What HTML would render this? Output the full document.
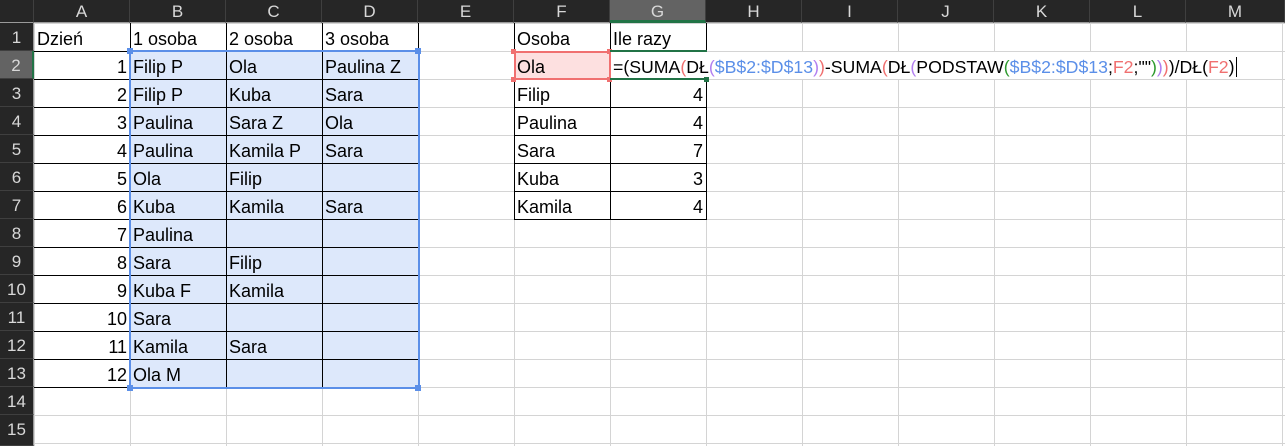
<!DOCTYPE html>
<html><head><meta charset="utf-8"><style>
body{margin:0;width:1285px;height:446px;overflow:hidden;background:#fff;font-family:"Liberation Sans",Arial,sans-serif;position:relative}
div{position:absolute;box-sizing:border-box}
.grid{left:34px;top:23px;width:1251px;height:423px;
background-image:linear-gradient(to right,#d4d4d4 1px,transparent 1px),linear-gradient(to bottom,#d4d4d4 1px,transparent 1px);
background-size:96px 28px;background-position:0 0}
.ch{top:0;height:23px;background:#262626;color:#d8d8d8;text-align:center;font-size:17px;line-height:24px;border-right:1px solid #3f3f3f;border-bottom:1px solid #9a9a9a;width:96px}
.rh{left:0;width:34px;height:28px;background:#262626;color:#d8d8d8;text-align:center;font-size:17px;line-height:30px;border-bottom:1px solid #3f3f3f;border-right:1px solid #9a9a9a}
.c{height:28px;line-height:32px;font-size:18px;white-space:nowrap;padding-left:3px;width:96px;color:#000}
.r{text-align:right;padding-right:3px;padding-left:0}
.hl{height:1px;background:#000}
.vl{width:1px;background:#000}
</style></head><body>
<div class="grid"></div>
<div class="ch" style="left:0;width:34px"></div>
<div class="ch" style="left:34px">A</div><div class="ch" style="left:130px">B</div><div class="ch" style="left:226px">C</div><div class="ch" style="left:322px">D</div><div class="ch" style="left:418px">E</div><div class="ch" style="left:514px">F</div><div class="ch" style="left:610px;background:#636363;border-bottom:3px solid #217346">G</div><div class="ch" style="left:706px">H</div><div class="ch" style="left:802px">I</div><div class="ch" style="left:898px">J</div><div class="ch" style="left:994px">K</div><div class="ch" style="left:1090px">L</div><div class="ch" style="left:1186px;width:99px">M</div>
<div class="rh" style="top:23px">1</div><div class="rh" style="top:51px;background:#636363;border-right:2px solid #217346">2</div><div class="rh" style="top:79px">3</div><div class="rh" style="top:107px">4</div><div class="rh" style="top:135px">5</div><div class="rh" style="top:163px">6</div><div class="rh" style="top:191px">7</div><div class="rh" style="top:219px">8</div><div class="rh" style="top:247px">9</div><div class="rh" style="top:275px">10</div><div class="rh" style="top:303px">11</div><div class="rh" style="top:331px">12</div><div class="rh" style="top:359px">13</div><div class="rh" style="top:387px">14</div><div class="rh" style="top:415px;height:31px">15</div>
<div style="left:130px;top:51px;width:288px;height:336px;background:#dde8fb"></div>
<div class="hl" style="left:34px;top:51px;width:384px"></div><div class="hl" style="left:34px;top:79px;width:384px"></div><div class="hl" style="left:34px;top:107px;width:384px"></div><div class="hl" style="left:34px;top:135px;width:384px"></div><div class="hl" style="left:34px;top:163px;width:384px"></div><div class="hl" style="left:34px;top:191px;width:384px"></div><div class="hl" style="left:34px;top:219px;width:384px"></div><div class="hl" style="left:34px;top:247px;width:384px"></div><div class="hl" style="left:34px;top:275px;width:384px"></div><div class="hl" style="left:34px;top:303px;width:384px"></div><div class="hl" style="left:34px;top:331px;width:384px"></div><div class="hl" style="left:34px;top:359px;width:384px"></div><div class="hl" style="left:34px;top:387px;width:384px"></div>
<div class="vl" style="left:130px;top:23px;height:365px"></div><div class="vl" style="left:226px;top:23px;height:365px"></div><div class="vl" style="left:322px;top:23px;height:365px"></div><div class="vl" style="left:418px;top:23px;height:365px"></div>
<div class="hl" style="left:514px;top:51px;width:193px"></div><div class="hl" style="left:514px;top:79px;width:193px"></div><div class="hl" style="left:514px;top:107px;width:193px"></div><div class="hl" style="left:514px;top:135px;width:193px"></div><div class="hl" style="left:514px;top:163px;width:193px"></div><div class="hl" style="left:514px;top:191px;width:193px"></div><div class="hl" style="left:514px;top:219px;width:193px"></div>
<div class="vl" style="left:514px;top:23px;height:197px"></div><div class="vl" style="left:610px;top:23px;height:197px"></div><div class="vl" style="left:706px;top:23px;height:197px"></div>
<div class="c" style="left:34px;top:23px">Dzień</div><div class="c" style="left:130px;top:23px">1 osoba</div><div class="c" style="left:226px;top:23px">2 osoba</div><div class="c" style="left:322px;top:23px">3 osoba</div>
<div class="c r" style="left:34px;top:51px">1</div><div class="c" style="left:130px;top:51px">Filip P</div><div class="c" style="left:226px;top:51px">Ola</div><div class="c" style="left:322px;top:51px">Paulina Z</div>
<div class="c r" style="left:34px;top:79px">2</div><div class="c" style="left:130px;top:79px">Filip P</div><div class="c" style="left:226px;top:79px">Kuba</div><div class="c" style="left:322px;top:79px">Sara</div>
<div class="c r" style="left:34px;top:107px">3</div><div class="c" style="left:130px;top:107px">Paulina</div><div class="c" style="left:226px;top:107px">Sara Z</div><div class="c" style="left:322px;top:107px">Ola</div>
<div class="c r" style="left:34px;top:135px">4</div><div class="c" style="left:130px;top:135px">Paulina</div><div class="c" style="left:226px;top:135px">Kamila P</div><div class="c" style="left:322px;top:135px">Sara</div>
<div class="c r" style="left:34px;top:163px">5</div><div class="c" style="left:130px;top:163px">Ola</div><div class="c" style="left:226px;top:163px">Filip</div>
<div class="c r" style="left:34px;top:191px">6</div><div class="c" style="left:130px;top:191px">Kuba</div><div class="c" style="left:226px;top:191px">Kamila</div><div class="c" style="left:322px;top:191px">Sara</div>
<div class="c r" style="left:34px;top:219px">7</div><div class="c" style="left:130px;top:219px">Paulina</div>
<div class="c r" style="left:34px;top:247px">8</div><div class="c" style="left:130px;top:247px">Sara</div><div class="c" style="left:226px;top:247px">Filip</div>
<div class="c r" style="left:34px;top:275px">9</div><div class="c" style="left:130px;top:275px">Kuba F</div><div class="c" style="left:226px;top:275px">Kamila</div>
<div class="c r" style="left:34px;top:303px">10</div><div class="c" style="left:130px;top:303px">Sara</div>
<div class="c r" style="left:34px;top:331px">11</div><div class="c" style="left:130px;top:331px">Kamila</div><div class="c" style="left:226px;top:331px">Sara</div>
<div class="c r" style="left:34px;top:359px">12</div><div class="c" style="left:130px;top:359px">Ola M</div>
<div class="c" style="left:514px;top:23px">Osoba</div><div class="c" style="left:610px;top:23px">Ile razy</div>
<div style="left:514px;top:51px;width:97px;height:29px;background:#fde0e0;border:2px solid #f07070"></div>
<div class="c" style="left:514px;top:51px">Ola</div>
<div class="c" style="left:514px;top:79px">Filip</div><div class="c r" style="left:610px;top:79px">4</div>
<div class="c" style="left:514px;top:107px">Paulina</div><div class="c r" style="left:610px;top:107px">4</div>
<div class="c" style="left:514px;top:135px">Sara</div><div class="c r" style="left:610px;top:135px">7</div>
<div class="c" style="left:514px;top:163px">Kuba</div><div class="c r" style="left:610px;top:163px">3</div>
<div class="c" style="left:514px;top:191px">Kamila</div><div class="c r" style="left:610px;top:191px">4</div>
<div style="left:129px;top:50px;width:291px;height:339px;border:2px solid #5b8fe8;"></div>
<div style="left:127px;top:48px;width:6px;height:6px;background:#5b8fe8"></div>
<div style="left:415px;top:48px;width:6px;height:6px;background:#5b8fe8"></div>
<div style="left:127px;top:385px;width:6px;height:6px;background:#5b8fe8"></div>
<div style="left:415px;top:385px;width:6px;height:6px;background:#5b8fe8"></div>
<div style="left:511px;top:49px;width:5px;height:5px;background:#f07070"></div>
<div style="left:607px;top:49px;width:5px;height:5px;background:#f07070"></div>
<div style="left:511px;top:77px;width:5px;height:5px;background:#f07070"></div>
<div style="left:607px;top:77px;width:5px;height:5px;background:#f07070"></div>
<div style="left:611px;top:52px;width:623px;height:27px;background:#fff"></div>
<div style="left:610px;top:50px;width:97px;height:2px;background:#217346"></div>
<div style="left:610px;top:78px;width:97px;height:2px;background:#217346"></div>
<div style="left:704px;top:77px;width:5px;height:5px;background:#217346"></div>
<div style="left:611px;top:52px;height:28px;line-height:31px;font-size:17.7px;white-space:nowrap;padding-left:2px;">=(SUMA<span style="color:#f07070">(</span>DŁ<span style="color:#b27ff0">(</span><span style="color:#5b8fe8">$B$2:$D$13</span><span style="color:#b27ff0">)</span><span style="color:#f07070">)</span>-SUMA<span style="color:#f07070">(</span>DŁ<span style="color:#b27ff0">(</span>PODSTAW<span style="color:#2e9a2e">(</span><span style="color:#5b8fe8">$B$2:$D$13</span>;<span style="color:#f07070">F2</span>;""<span style="color:#2e9a2e">)</span><span style="color:#b27ff0">)</span><span style="color:#f07070">)</span>)/DŁ(<span style="color:#f07070">F2</span>)<span style="border-left:1px solid #000;margin-left:1px"></span></div>
</body></html>
